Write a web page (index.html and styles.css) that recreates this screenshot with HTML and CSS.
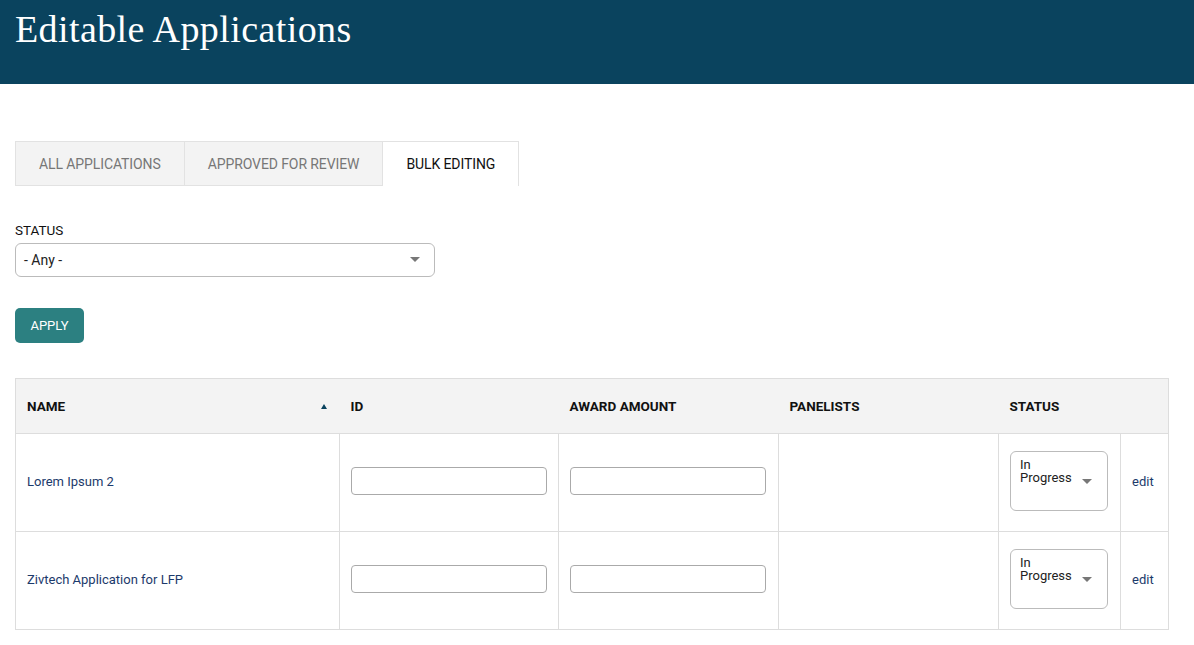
FILE: index.html
```html
<!DOCTYPE html>
<html>
<head>
<meta charset="utf-8">
<link rel="stylesheet" href="styles.css">
</head>
<body>
<header class="site-header">
  <h1 class="page-title">Editable Applications</h1>
</header>
<main class="content">
  <nav class="tabs">
    <a class="tab">ALL APPLICATIONS</a>
    <a class="tab">APPROVED FOR REVIEW</a>
    <a class="tab active">BULK EDITING</a>
  </nav>
  <div class="filter">
    <label class="filter-label">STATUS</label>
    <div class="select wide"><span>- Any -</span><span class="caret"></span></div>
  </div>
  <button class="apply">APPLY</button>
  <table class="grid">
    <thead>
      <tr>
        <th class="c-name"><div class="th-sort"><span>NAME</span><span class="sort-up"></span></div></th>
        <th class="c-id">ID</th>
        <th class="c-award">AWARD AMOUNT</th>
        <th class="c-pan">PANELISTS</th>
        <th class="c-status">STATUS</th>
        <th class="c-edit"></th>
      </tr>
    </thead>
    <tbody>
      <tr>
        <td><a class="link">Lorem Ipsum 2</a></td>
        <td><div class="input"></div></td>
        <td><div class="input"></div></td>
        <td></td>
        <td><div class="select tall"><span class="tall-text">In<br>Progress</span><span class="caret"></span></div></td>
        <td><a class="link">edit</a></td>
      </tr>
      <tr>
        <td><a class="link">Zivtech Application for LFP</a></td>
        <td><div class="input"></div></td>
        <td><div class="input"></div></td>
        <td></td>
        <td><div class="select tall"><span class="tall-text">In<br>Progress</span><span class="caret"></span></div></td>
        <td><a class="link">edit</a></td>
      </tr>
    </tbody>
  </table>
</main>
</body>
</html>
```
FILE: styles.css
```css
* { box-sizing: border-box; }
body {
  margin: 0;
  font-family: Roboto, "Liberation Sans", sans-serif;
  color: #111;
  background: #fff;
}
.site-header {
  background: #0a435e;
  height: 84px;
  padding: 9px 15px 0;
}
.page-title {
  margin: 0;
  font-family: "Liberation Serif", "DejaVu Serif", serif;
  font-weight: normal;
  font-size: 38px;
  line-height: 40px;
  color: #fff;
  letter-spacing: 0.4px;
}
.content {
  padding: 57px 25px 0 15px;
}
.tabs {
  display: flex;
  height: 45px;
}
.tab {
  display: flex;
  align-items: center;
  padding: 0 23px;
  background: #f3f3f3;
  border: 1px solid #e2e2e2;
  border-right: none;
  font-size: 14px;
  color: #777;
  letter-spacing: -0.1px;
}
.tab.active {
  background: #fff;
  color: #111;
  border-bottom: none;
  border-right: 1px solid #e2e2e2;
}
.filter {
  margin-top: 36px;
}
.filter-label {
  display: block;
  font-size: 13.5px;
  line-height: 16px;
  color: #111;
  margin-bottom: 5px;
}
.select {
  display: flex;
  border: 1px solid #bbb;
  border-radius: 6px;
  background: #fff;
  font-size: 14px;
  color: #222;
  position: relative;
}
.select.wide {
  width: 420px;
  height: 34px;
  align-items: center;
  padding: 0 8px;
}
.caret {
  position: absolute;
  right: 14px;
  top: 50%;
  margin-top: -3px;
  width: 0;
  height: 0;
  border-left: 5px solid transparent;
  border-right: 5px solid transparent;
  border-top: 5px solid #777;
}
.apply {
  display: block;
  margin-top: 31px;
  height: 35px;
  width: 69px;
  border: none;
  border-radius: 5px;
  background: #2c8081;
  color: #fff;
  font-family: inherit;
  font-size: 13px;
  padding: 0;
}
.grid {
  margin-top: 35px;
  width: 1154px;
  border-collapse: collapse;
  font-size: 13px;
}
.grid th {
  background: #f3f3f3;
  height: 55px;
  text-align: left;
  font-weight: bold;
  font-size: 13.5px;
  padding: 0 11px;
  border-top: 1px solid #ddd;
  border-bottom: 1px solid #ddd;
  color: #111;
}
.grid th:first-child { border-left: 1px solid #ddd; }
.grid th:last-child { border-right: 1px solid #ddd; }
.c-name { width: 324px; }
.c-id { width: 219px; }
.c-award { width: 220px; }
.c-pan { width: 220px; }
.c-status { width: 122px; }
.th-sort {
  display: flex;
  justify-content: space-between;
  align-items: center;
}
.sort-up {
  width: 0;
  height: 0;
  border-left: 3.5px solid transparent;
  border-right: 3.5px solid transparent;
  border-bottom: 5px solid #0a435e;
  margin-right: 2px;
}
.grid td {
  height: 98px;
  border: 1px solid #ddd;
  padding: 0 11px 3px;
  vertical-align: middle;
}
.link {
  color: #1c3a6b;
  font-size: 13px;
}
.input {
  height: 28px;
  width: 196px;
  border: 1px solid #aaa;
  border-radius: 4px;
  background: #fff;
}
.select.tall {
  width: 98px;
  height: 60px;
  padding: 6px 9px;
  font-size: 13px;
  line-height: 13px;
  color: #222;
}
.select.tall .caret {
  top: 27px;
  right: 15px;
  margin-top: 0;
}
```
